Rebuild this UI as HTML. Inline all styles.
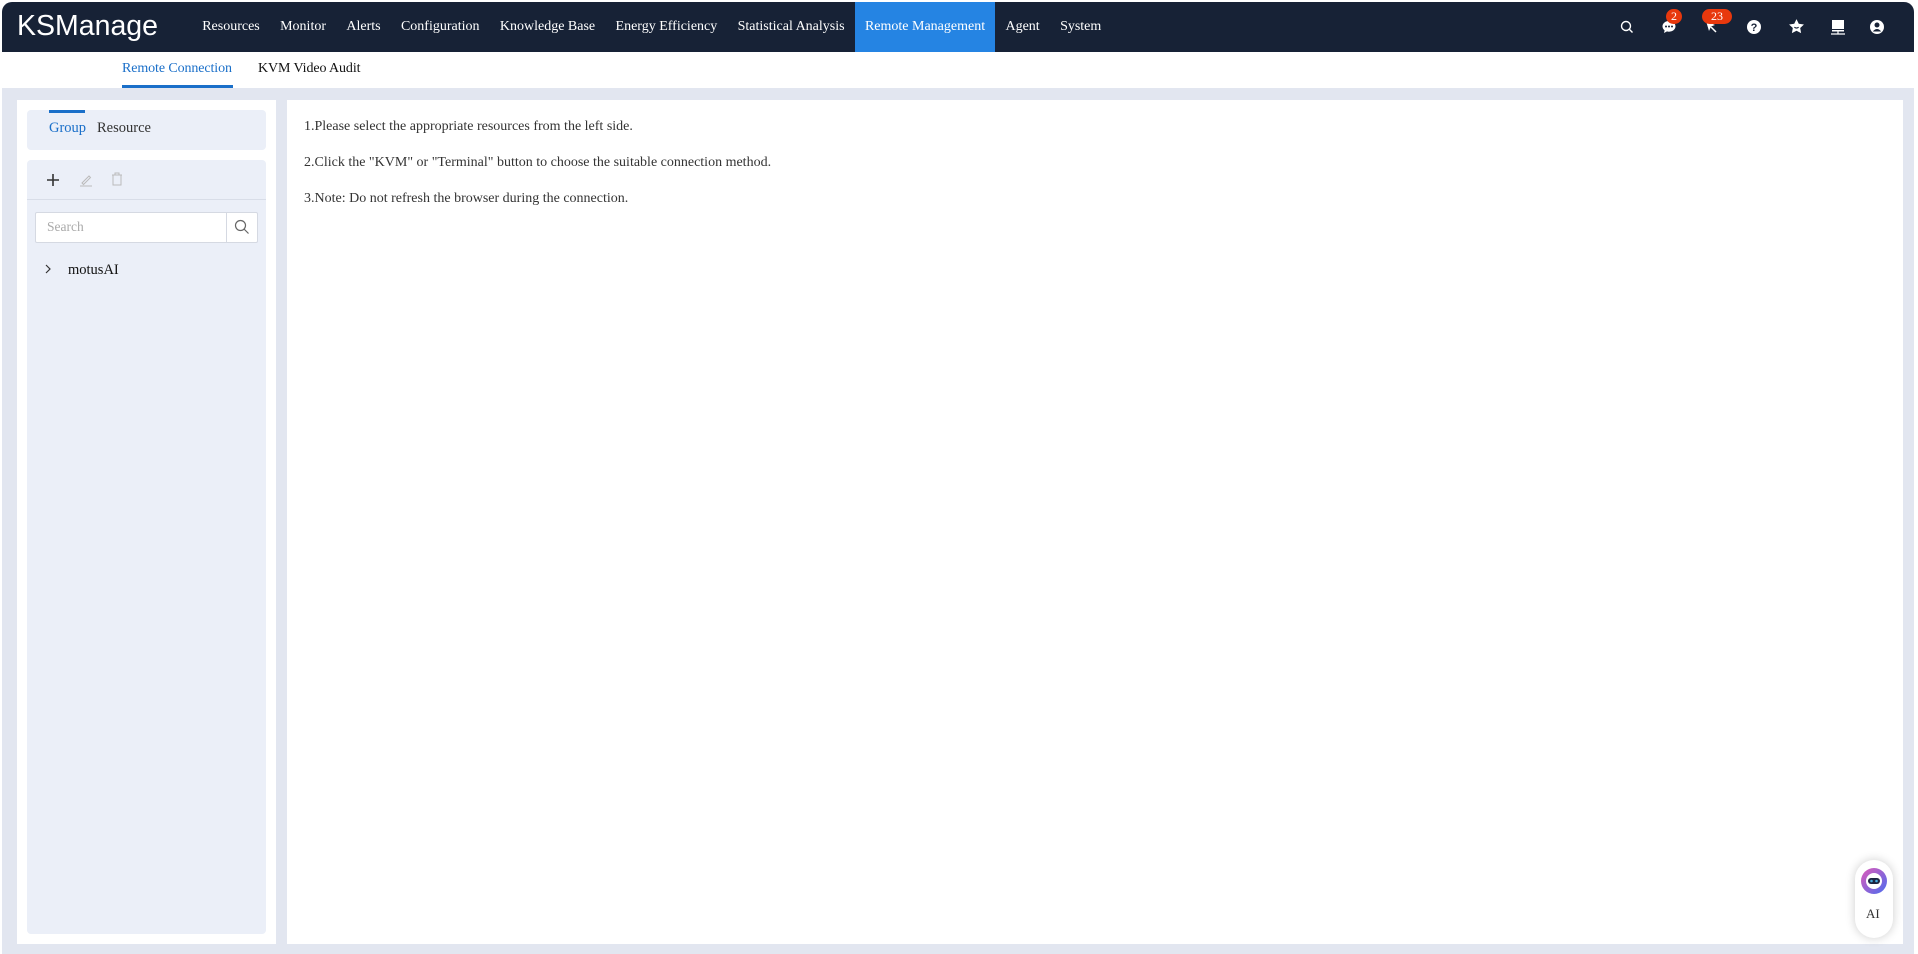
<!DOCTYPE html>
<html><head><meta charset="utf-8"><style>
*{box-sizing:border-box;margin:0;padding:0}
body{width:1918px;height:954px;overflow:hidden;background:#fff;font-family:"Liberation Serif",serif;position:relative}
.app{position:absolute;left:2px;top:2px;width:1912px;height:952px;background:#e2e6f0;border-radius:10px 10px 0 0;overflow:hidden}
.top{position:absolute;left:0;top:0;width:100%;height:50px;background:#172236}
.logo{position:absolute;left:15px;top:8px;font-family:"Liberation Sans",sans-serif;font-size:28.5px;color:#fff}
.nav{position:absolute;left:190px;top:0;height:50px;display:flex}
.nav div{height:50px;line-height:50px;padding:0 10.2px;color:#fff;font-size:14px;letter-spacing:0}
.nav .on{background:#2584e3}
.sub{position:absolute;left:0;top:50px;width:100%;height:36px;background:#fff}
.sub span{position:absolute;top:9px;font-size:14px;color:#111;letter-spacing:-0.1px}
.sub .a{left:120px;color:#1a6fc9}
.sub .u{position:absolute;left:120px;top:33px;width:111px;height:3px;background:#1a6fc9}
.lp{position:absolute;left:15px;top:98px;width:259px;height:844px;background:#fff}
.c1{position:absolute;left:10px;top:10px;width:239px;height:40px;background:#ebeff8;border-radius:4px}
.c1 .bar{position:absolute;left:22px;top:0;width:36px;height:3px;background:#1a6fc9}
.c1 .g{position:absolute;left:22px;top:10px;font-size:14.5px;color:#1a6fc9}
.c1 .r{position:absolute;left:70px;top:10px;font-size:14.5px;color:#333}
.c2{position:absolute;left:10px;top:60px;width:239px;height:774px;background:#ebeff8;border-radius:4px}
.tb{height:40px;border-bottom:1px solid #d8dde8;position:relative}
.srch{position:absolute;left:8px;top:52px;width:223px;height:31px;background:#fff;border:1px solid #d5d9e2;border-radius:2px}
.srch span{position:absolute;left:11px;top:6px;font-size:13.5px;color:#aaa}
.srch i{position:absolute;right:0;top:0;width:31px;height:29px;border-left:1px solid #d5d9e2}
.tree{position:absolute;left:16px;top:102px;font-size:14.5px;color:#111}
.rp{position:absolute;left:285px;top:98px;width:1616px;height:844px;background:#fff}
.rp p{position:absolute;left:17px;font-size:14px;color:#333}
.ai{position:absolute;left:1853px;top:858px;width:38px;height:78px;background:#fff;border-radius:19px;box-shadow:0 0 10px rgba(0,0,0,.2)}
.badge{position:absolute;background:#e8380d;color:#fff;font-size:12px;height:15px;line-height:15px;border-radius:8px;text-align:center}
</style></head><body>
<div class="app">
<div class="top">
<div class="logo">KSManage</div>
<div class="nav"><div>Resources</div><div>Monitor</div><div>Alerts</div><div>Configuration</div><div>Knowledge Base</div><div>Energy Efficiency</div><div>Statistical Analysis</div><div class="on">Remote Management</div><div>Agent</div><div>System</div></div>
<svg style="position:absolute;left:1618px;top:18px" width="14" height="14" viewBox="0 0 14 14"><circle cx="6" cy="6" r="4.5" fill="none" stroke="#fff" stroke-width="1.4"/><path d="M9.3 9.3L12.5 12.5" stroke="#fff" stroke-width="1.4"/></svg>
<svg style="position:absolute;left:1659px;top:17px" width="16" height="16" viewBox="0 0 16 16"><path d="M8 2C4.3 2 1.5 4.4 1.5 7.4c0 1.6.8 3 2.1 4L3 14l3-1.6c.6.2 1.3.3 2 .3 3.7 0 6.5-2.4 6.5-5.4S11.7 2 8 2z" fill="#fff"/><circle cx="5" cy="7.5" r="1" fill="#172236"/><circle cx="8" cy="7.5" r="1" fill="#172236"/><circle cx="11" cy="7.5" r="1" fill="#172236"/></svg>
<div class="badge" style="left:1664px;top:7px;width:16px">2</div>
<svg style="position:absolute;left:1702px;top:18px" width="14" height="14" viewBox="0 0 14 14"><path d="M2 1l9 4-4 1.5L5 11z" fill="#fff"/><path d="M7 7l5 5" stroke="#fff" stroke-width="1.5"/></svg>
<div class="badge" style="left:1700px;top:7px;width:30px">23</div>
<svg style="position:absolute;left:1744px;top:17px" width="16" height="16" viewBox="0 0 16 16"><circle cx="8" cy="8" r="7" fill="#fff"/><text x="8" y="12" font-size="11" font-weight="bold" text-anchor="middle" fill="#172236" font-family="Liberation Sans">?</text></svg>
<svg style="position:absolute;left:1786px;top:16px" width="17" height="17" viewBox="0 0 24 24"><path d="M12 1.5l3.2 6.6 7.3 1-5.3 5.1 1.3 7.2L12 18l-6.5 3.4 1.3-7.2L1.5 9.1l7.3-1z" fill="#fff"/><path d="M9 13q3 2.5 6 0" stroke="#172236" stroke-width="1.5" fill="none"/></svg>
<svg style="position:absolute;left:1827px;top:16px" width="18" height="18" viewBox="0 0 18 18"><rect x="3" y="2" width="12" height="9" fill="#fff"/><rect x="3" y="12" width="12" height="1.5" fill="#fff"/><path d="M9 13.5v2M2 16h14" stroke="#fff" stroke-width="1.2"/></svg>
<svg style="position:absolute;left:1867px;top:17px" width="16" height="16" viewBox="0 0 16 16"><circle cx="8" cy="8" r="7" fill="#fff"/><circle cx="8" cy="6" r="2.5" fill="#172236"/><path d="M3.8 12.5q4.2-5 8.4 0" fill="#172236"/></svg>
</div>
<div class="sub"><span class="a">Remote Connection</span><span style="left:256px">KVM Video Audit</span><div class="u"></div></div>
<div class="lp">
<div class="c1"><div class="bar"></div><span class="g">Group</span><span class="r">Resource</span></div>
<div class="c2">
<div class="tb">
<svg style="position:absolute;left:20px;top:14px" width="12" height="12"><path d="M6 0v12M0 6h12" stroke="#333" stroke-width="1.6"/></svg>
<svg style="position:absolute;left:52px;top:13px" width="14" height="14"><path d="M3 10L10 3l1.5 1.5L4.5 11.5zM1 13h12" stroke="#bbb" stroke-width="1" fill="none"/></svg>
<svg style="position:absolute;left:84px;top:12px" width="12" height="14"><path d="M1 3h10M4 3V1h4v2M2 3v10h8V3" stroke="#bbb" stroke-width="1" fill="none"/></svg>
</div>
<div class="srch"><span>Search</span><i><svg style="position:absolute;left:7px;top:6px" width="16" height="16"><circle cx="6.5" cy="6.5" r="5" fill="none" stroke="#666" stroke-width="1.2"/><path d="M10 10l4.5 4.5" stroke="#666" stroke-width="1.2"/></svg></i></div>
<div class="tree"><svg width="10" height="10" style="margin-right:15px"><path d="M3 1l4 4-4 4" stroke="#333" stroke-width="1.2" fill="none"/></svg>motusAI</div>
</div>
</div>
<div class="rp">
<p style="top:19px">1.Please select the appropriate resources from the left side.</p>
<p style="top:55px">2.Click the "KVM" or "Terminal" button to choose the suitable connection method.</p>
<p style="top:91px">3.Note: Do not refresh the browser during the connection.</p>
</div>
<div class="ai">
<svg style="position:absolute;left:5px;top:7px" width="28" height="28" viewBox="0 0 28 28"><defs><linearGradient id="g" x1="0" y1="0" x2="1" y2="1"><stop offset="0" stop-color="#e05ab8"/><stop offset="1" stop-color="#4a6cf0"/></linearGradient></defs><circle cx="14" cy="14" r="13" fill="url(#g)"/><circle cx="14" cy="14" r="8" fill="#fff"/><rect x="8" y="11" width="12" height="6" rx="3" fill="#1c2440"/><circle cx="11.5" cy="14" r="1.3" fill="#4ad"/><circle cx="16.5" cy="14" r="1.3" fill="#4ad"/></svg>
<span style="position:absolute;left:11px;top:46px;font-size:13px;color:#333">AI</span>
</div>
</div>
</body></html>
